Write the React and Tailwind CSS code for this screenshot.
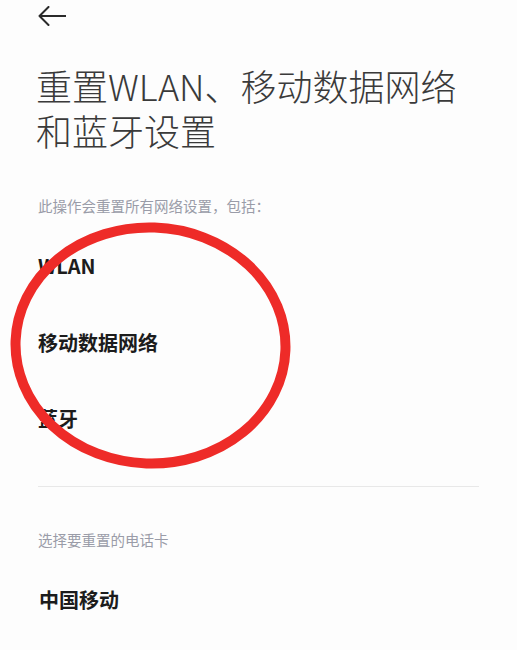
import React from "react";

export default function App() {
  const cjk = { fontFamily: '"Noto Sans CJK SC", "Noto Sans", sans-serif' };
  return (
    <div
      className="relative w-[517px] h-[650px] overflow-hidden bg-[#fdfdfd] text-[#1c1c1c]"
      style={cjk}
    >
      <div className="h-[32px] pl-[38px] flex items-center">
        <svg width="28" height="20" viewBox="0 0 28 20" fill="none">
          <path d="M1.5 10H28M10.5 1L1.5 10L10.5 19" stroke="#2a2a2a" strokeWidth="2" strokeLinecap="round" strokeLinejoin="round" />
        </svg>
      </div>

      <div className="mt-[31px] px-[36px] text-[36px] leading-[45px] font-light text-[#3a3a3a]">
        <div>重置WLAN、移动数据网络</div>
        <div>和蓝牙设置</div>
      </div>

      <div className="mt-[43px] px-[38px] text-[14.5px] leading-[20px] text-[#9a9ca8]">
        此操作会重置所有网络设置，包括：
      </div>

      <div className="mt-[12px] px-[38px] flex flex-col text-[20px] font-bold">
        <div className="h-[76px] flex items-center">WLAN</div>
        <div className="h-[77px] flex items-center">移动数据网络</div>
        <div className="h-[76px] flex items-center">蓝牙</div>
      </div>

      <div className="mt-[29px] mx-[38px] h-px bg-[#e8e8e8]" />

      <div className="mt-[43px] px-[38px] text-[14.5px] leading-[20px] text-[#9a9ca8]">
        选择要重置的电话卡
      </div>

      <div className="mt-[36px] px-[39px] text-[20px] leading-[28px] font-bold">
        中国移动
      </div>

      <svg
        className="absolute left-[10px] top-[222px]"
        width="282"
        height="248"
        viewBox="0 0 282 248"
        fill="none"
      >
        <ellipse cx="140.5" cy="123.5" rx="135" ry="118" stroke="#ee2b28" strokeWidth="10" transform="rotate(2 140.5 123.5)" />
      </svg>
    </div>
  );
}
